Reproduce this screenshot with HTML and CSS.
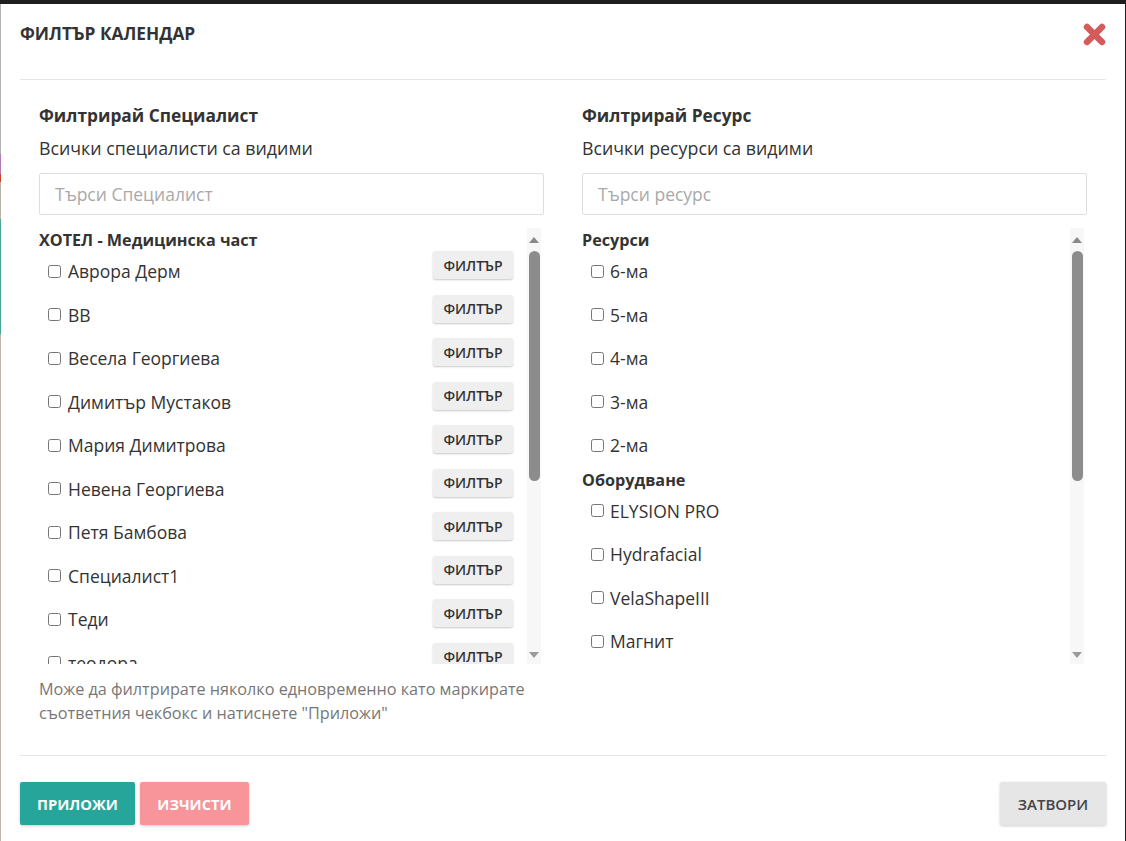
FILE: index.html
```html
<!DOCTYPE html>
<html lang="bg">
<head>
<meta charset="utf-8">
<title>Филтър календар</title>
<link rel="stylesheet" href="styles.css">
</head>
<body>
<div class="topbar"></div>
<div class="page">
  <div class="edge"></div>
  <div class="modal">
    <div class="modal-header">
      <h1 class="modal-title">ФИЛТЪР КАЛЕНДАР</h1>
      <button class="close-btn" aria-label="Затвори">
        <svg width="23" height="23" viewBox="0 0 23 23">
          <line x1="4" y1="4" x2="19" y2="19" stroke="#d45b5b" stroke-width="6.5" stroke-linecap="round"/>
          <line x1="19" y1="4" x2="4" y2="19" stroke="#d45b5b" stroke-width="6.5" stroke-linecap="round"/>
        </svg>
      </button>
    </div>
    <div class="divider"></div>
    <div class="modal-body">
      <div class="col">
        <h2 class="col-title">Филтрирай Специалист</h2>
        <p class="col-sub">Всички специалисти са видими</p>
        <input class="search" type="text" placeholder="Търси Специалист">
        <div class="list-wrap">
          <div class="list">
            <div class="group">ХОТЕЛ - Медицинска част</div>
            <div class="row"><label class="item"><input type="checkbox">Аврора Дерм</label><button class="filter-btn">ФИЛТЪР</button></div>
            <div class="row"><label class="item"><input type="checkbox">ВВ</label><button class="filter-btn">ФИЛТЪР</button></div>
            <div class="row"><label class="item"><input type="checkbox">Весела Георгиева</label><button class="filter-btn">ФИЛТЪР</button></div>
            <div class="row"><label class="item"><input type="checkbox">Димитър Мустаков</label><button class="filter-btn">ФИЛТЪР</button></div>
            <div class="row"><label class="item"><input type="checkbox">Мария Димитрова</label><button class="filter-btn">ФИЛТЪР</button></div>
            <div class="row"><label class="item"><input type="checkbox">Невена Георгиева</label><button class="filter-btn">ФИЛТЪР</button></div>
            <div class="row"><label class="item"><input type="checkbox">Петя Бамбова</label><button class="filter-btn">ФИЛТЪР</button></div>
            <div class="row"><label class="item"><input type="checkbox">Специалист1</label><button class="filter-btn">ФИЛТЪР</button></div>
            <div class="row"><label class="item"><input type="checkbox">Теди</label><button class="filter-btn">ФИЛТЪР</button></div>
            <div class="row"><label class="item"><input type="checkbox">теодора</label><button class="filter-btn">ФИЛТЪР</button></div>
          </div>
          <div class="scrollbar">
            <span class="arrow-up"></span>
            <span class="thumb"></span>
            <span class="arrow-down"></span>
          </div>
        </div>
        <p class="help">Може да филтрирате няколко едновременно като маркирате съответния чекбокс и натиснете "Приложи"</p>
      </div>
      <div class="col">
        <h2 class="col-title">Филтрирай Ресурс</h2>
        <p class="col-sub">Всички ресурси са видими</p>
        <input class="search" type="text" placeholder="Търси ресурс">
        <div class="list-wrap">
          <div class="list">
            <div class="group">Ресурси</div>
            <div class="row"><label class="item narrow"><input type="checkbox">6-ма</label></div>
            <div class="row"><label class="item narrow"><input type="checkbox">5-ма</label></div>
            <div class="row"><label class="item narrow"><input type="checkbox">4-ма</label></div>
            <div class="row"><label class="item narrow"><input type="checkbox">3-ма</label></div>
            <div class="row"><label class="item narrow"><input type="checkbox">2-ма</label></div>
            <div class="group group-next">Оборудване</div>
            <div class="row"><label class="item narrow"><input type="checkbox">ELYSION PRO</label></div>
            <div class="row"><label class="item narrow"><input type="checkbox">Hydrafacial</label></div>
            <div class="row"><label class="item narrow"><input type="checkbox">VelaShapeIII</label></div>
            <div class="row"><label class="item narrow"><input type="checkbox">Магнит</label></div>
            <div class="row"><label class="item narrow"><input type="checkbox">Лазер</label></div>
          </div>
          <div class="scrollbar">
            <span class="arrow-up"></span>
            <span class="thumb"></span>
            <span class="arrow-down"></span>
          </div>
        </div>
      </div>
    </div>
    <div class="divider"></div>
    <div class="modal-footer">
      <div class="footer-left">
        <button class="btn btn-apply">ПРИЛОЖИ</button>
        <button class="btn btn-clear">ИЗЧИСТИ</button>
      </div>
      <button class="btn btn-close">ЗАТВОРИ</button>
    </div>
  </div>
</div>
</body>
</html>
```

FILE: styles.css
```css
* { box-sizing: border-box; }

html, body {
  margin: 0;
  padding: 0;
  height: 100%;
  overflow: hidden;
}

body {
  background: #1f1f1f;
  font-family: "Open Sans", "Noto Sans", "Liberation Sans", sans-serif;
  color: #333;
}

.topbar {
  height: 4px;
  background: #1f1f1f;
}

.page {
  display: flex;
  height: 837px;
}

.edge {
  width: 1px;
  background: linear-gradient(#b3b3b3 0, #b3b3b3 150px, #b07ab8 150px, #b07ab8 170px, #c9432b 170px, #c9432b 178px, #b9b3a6 178px, #b9b3a6 215px, #49a79a 215px, #49a79a 330px, #bdb6a8 330px);
}

.modal {
  width: 1124px;
  background: #fff;
  display: flex;
  flex-direction: column;
}

.modal-header {
  height: 75px;
  display: flex;
  justify-content: space-between;
  align-items: flex-start;
  padding: 19px 19px 0 19px;
}

.modal-title {
  margin: -1px 0 0 0;
  font-size: 17.3px;
  line-height: 24px;
  font-weight: 700;
  color: #333;
}

.close-btn {
  margin: 0;
  padding: 0;
  border: 0;
  background: transparent;
  width: 23px;
  height: 23px;
  display: flex;
}

.divider {
  height: 1px;
  background: #e6e6e6;
  margin: 0 19px;
}

.modal-body {
  display: flex;
  padding: 24px 19px 30px 19px;
}

.col {
  width: 544px;
  padding: 0 19px;
}

.col-title {
  margin: 0;
  font-size: 17.3px;
  line-height: 24px;
  font-weight: 700;
  color: #333;
}

.col-sub {
  margin: 8px 0 0 0;
  font-size: 17.8px;
  line-height: 24px;
  color: #333;
}

.search {
  display: block;
  width: 100%;
  height: 42px;
  margin-top: 13px;
  border: 1px solid #dedede;
  border-radius: 2px;
  padding: 0 15px;
  font-family: inherit;
  font-size: 17.5px;
  color: #333;
  outline: none;
}

.search::placeholder {
  color: #a9a9a9;
}

.list-wrap {
  display: flex;
  height: 436px;
  margin-top: 13px;
  margin-right: 3px;
}

.list {
  flex: 1;
  overflow: hidden;
  padding-top: 3px;
}

.group {
  font-size: 16.2px;
  line-height: 18px;
  font-weight: 700;
  color: #333;
}

.group-next {
  margin-top: 4px;
}

.row {
  height: 43.5px;
  display: flex;
  justify-content: space-between;
  align-items: flex-start;
  padding-right: 14px;
}

.item {
  display: flex;
  align-items: center;
  padding: 11px 0 0 9px;
  font-size: 17.5px;
  line-height: 22px;
  color: #333;
}

.item input {
  width: 13px;
  height: 13px;
  margin: 0 7px 0 0;
}

.item.narrow input {
  margin-right: 6px;
}

.filter-btn {
  margin-top: 2px;
  height: 28px;
  width: 80px;
  padding: 0;
  border: 0;
  border-radius: 3px;
  background: #efefef;
  box-shadow: 0 1px 2px rgba(0, 0, 0, 0.22);
  font-family: inherit;
  font-size: 14px;
  font-weight: 600;
  color: #333;
}

.scrollbar {
  width: 14px;
  background: #f7f7f7;
  display: flex;
  flex-direction: column;
  align-items: center;
}

.arrow-up {
  margin-top: 9px;
  width: 0;
  height: 0;
  border-left: 5px solid transparent;
  border-right: 5px solid transparent;
  border-bottom: 6px solid #8a8a8a;
}

.thumb {
  margin-top: 8px;
  width: 11px;
  height: 230px;
  border-radius: 6px;
  background: #8c8c8c;
}

.arrow-down {
  margin-top: auto;
  margin-bottom: 6px;
  width: 0;
  height: 0;
  border-left: 5px solid transparent;
  border-right: 5px solid transparent;
  border-top: 6px solid #9a9a9a;
}

.help {
  margin: 13px 0 0 0;
  font-size: 16.2px;
  line-height: 24px;
  color: #777;
  padding-right: 10px;
}

.modal-footer {
  display: flex;
  justify-content: space-between;
  padding: 26px 19px 0 19px;
}

.footer-left {
  display: flex;
  gap: 5px;
}

.btn {
  height: 43px;
  border: 0;
  border-radius: 2px;
  font-family: inherit;
  font-size: 14.7px;
  font-weight: 700;
  padding: 0;
  box-shadow: 0 1px 3px rgba(0, 0, 0, 0.2);
}

.btn-apply {
  width: 115px;
  background: #26a69a;
  color: #fff;
}

.btn-clear {
  width: 109px;
  background: #f8959a;
  color: #fff;
}

.btn-close {
  width: 106px;
  background: #e6e6e6;
  color: #444;
  font-weight: 600;
  font-size: 15px;
}
```
